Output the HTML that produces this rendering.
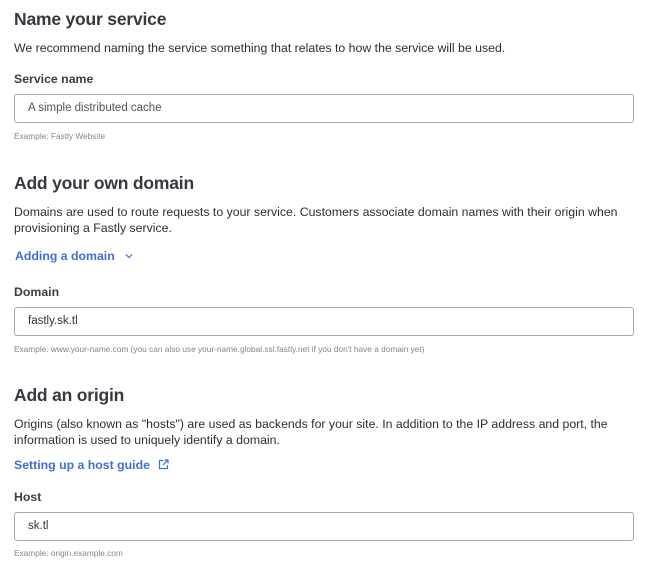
<!DOCTYPE html>
<html><head><meta charset="utf-8"><style>
body{margin:0;width:650px;height:575px;background:#fff;font-family:"Liberation Sans",sans-serif;color:#2e3338;position:relative;overflow:hidden}
.a{position:absolute;left:14px;white-space:nowrap}
h2{margin:0;font-size:17.5px;font-weight:bold;color:#353a40;letter-spacing:-0.2px}
.p{font-size:12.3px;color:#2b2f33;line-height:16px}
.l{font-size:12.3px;font-weight:bold;color:#3a3f44}
.in{position:absolute;left:14px;width:618px;height:27px;border:1px solid #a5a9ae;border-radius:3px;font-size:11.5px;line-height:27px;box-sizing:content-box}
.in span{position:absolute;left:13px}
.ex{font-size:8.3px;color:#80868c}
.lk{font-size:12.3px;font-weight:bold;color:#3d6fd8}
</style></head><body>
<h2 class="a" style="top:9px">Name your service</h2>
<div class="a p" style="top:40px">We recommend naming the service something that relates to how the service will be used.</div>
<div class="a l" style="top:72px">Service name</div>
<div class="in" style="top:94px"><span style="color:#555">A simple distributed cache</span></div>
<div class="a ex" style="top:131px">Example: Fastly Website</div>

<h2 class="a" style="top:173px">Add your own domain</h2>
<div class="a p" style="top:204px">Domains are used to route requests to your service. Customers associate domain names with their origin when<br>provisioning a Fastly service.</div>
<div class="a lk" style="top:249px;left:15px">Adding a domain <svg width="10" height="8" style="margin-left:6px" viewBox="0 0 10 8"><path d="M2 2.5l3 3 3-3" fill="none" stroke="#3d6fd8" stroke-width="1.2"/></svg></div>
<div class="a l" style="top:285px">Domain</div>
<div class="in" style="top:307px"><span style="color:#333">fastly.sk.tl</span></div>
<div class="a ex" style="top:344px">Example: www.your-name.com (you can also use your-name.global.ssl.fastly.net if you don't have a domain yet)</div>

<h2 class="a" style="top:385px">Add an origin</h2>
<div class="a p" style="top:416px">Origins (also known as "hosts") are used as backends for your site. In addition to the IP address and port, the<br>information is used to uniquely identify a domain.</div>
<div class="a lk" style="top:458px">Setting up a host guide <svg width="11" height="11" style="margin-left:5px;vertical-align:-1px" viewBox="0 0 11 11"><path d="M5 1.5H1.5v8h8V6M6.5 1h3.5v3.5M10 1L5 6" fill="none" stroke="#3d6fd8" stroke-width="1.2"/></svg></div>
<div class="a l" style="top:490px">Host</div>
<div class="in" style="top:512px"><span style="color:#333">sk.tl</span></div>
<div class="a ex" style="top:548px">Example: origin.example.com</div>
</body></html>
